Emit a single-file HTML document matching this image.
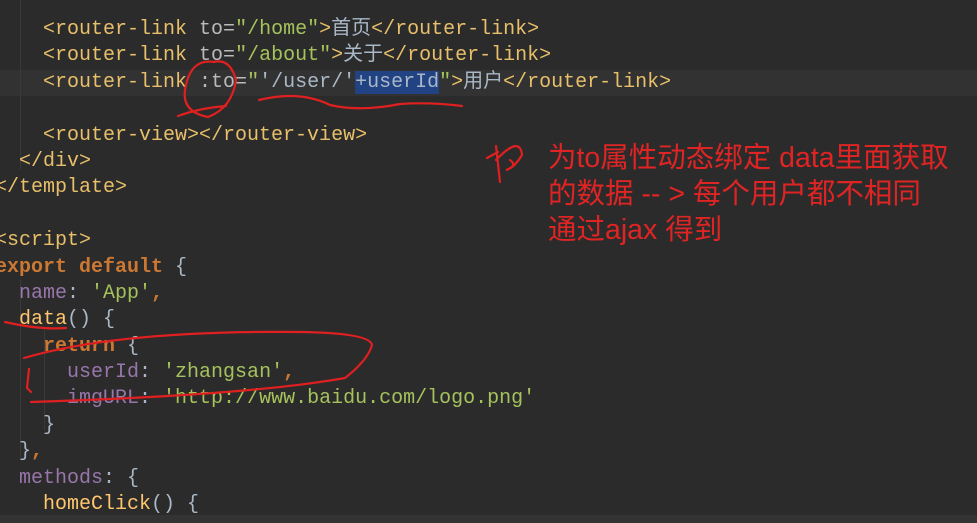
<!DOCTYPE html>
<html><head><meta charset="utf-8"><style>
body{margin:0;width:977px;height:523px;overflow:hidden;background:#2b2b2b;position:relative}
.code{position:absolute;left:-5px;top:17px;font-family:"Liberation Mono","Noto Sans CJK SC",monospace;font-size:20px;line-height:26.4px;color:#a9b7c6;white-space:pre}
.l{height:26.4px}
.t{color:#e8bf6a}.a{color:#bababa}.s{color:#a5c25c}.p{color:#9876aa}.k{color:#cc7832;font-weight:bold}.f{color:#ffc66d}
.cur{position:absolute;left:0;top:70px;width:977px;height:26px;background:#323232}
.sel{background:#214283}
.note{position:absolute;left:548px;top:140px;font-family:"Liberation Sans","Noto Sans CJK SC",sans-serif;font-size:28.5px;line-height:36px;color:#e02424;white-space:pre}
.bot{position:absolute;left:0;top:515px;width:977px;height:8px;background:#333}
.guide{position:absolute;width:1px;background:#3a3a3a}
</style></head><body>
<div class="cur"></div>
<div class="guide" style="left:20px;top:0;height:170px"></div>
<div class="guide" style="left:20px;top:280px;height:180px"></div>
<div class="guide" style="left:44px;top:330px;height:100px"></div>
<div class="code"><div class="l">    <span class="t">&lt;router-link </span><span class="a">to=</span><span class="s">"/home"</span><span class="t">&gt;</span>首页<span class="t">&lt;/router-link&gt;</span></div><div class="l">    <span class="t">&lt;router-link </span><span class="a">to=</span><span class="s">"/about"</span><span class="t">&gt;</span>关于<span class="t">&lt;/router-link&gt;</span></div><div class="l">    <span class="t">&lt;router-link </span><span class="a">:to=</span><span class="s">"</span>'/user/'<span class="sel">+userId</span><span class="s">"</span><span class="t">&gt;</span>用户<span class="t">&lt;/router-link&gt;</span></div><div class="l"> </div><div class="l">    <span class="t">&lt;router-view&gt;&lt;/router-view&gt;</span></div><div class="l">  <span class="t">&lt;/div&gt;</span></div><div class="l"><span class="t">&lt;/template&gt;</span></div><div class="l"> </div><div class="l"><span class="t">&lt;script&gt;</span></div><div class="l"><span class="k">export default</span> {</div><div class="l">  <span class="p">name</span>: <span class="s">'App'</span><span class="k">,</span></div><div class="l">  <span class="f">data</span>() {</div><div class="l">    <span class="k">return</span> {</div><div class="l">      <span class="p">userId</span>: <span class="s">'zhangsan'</span><span class="k">,</span></div><div class="l">      <span class="p">imgURL</span>: <span class="s">'http://www.baidu.com/logo.png'</span></div><div class="l">    }</div><div class="l">  }<span class="k">,</span></div><div class="l">  <span class="p">methods</span>: {</div><div class="l">    <span class="f">homeClick</span>() {</div></div>
<div class="note">为to属性动态绑定 data里面获取
的数据 -- &gt; 每个用户都不相同
通过ajax 得到</div>
<svg style="position:absolute;left:0;top:0" width="977" height="523" fill="none" stroke="#e02020" stroke-width="2.2" stroke-linecap="round">
<path d="M178 116 Q200 108 226 106 M214 62 Q190 58 185 90 Q182 112 208 117 Q232 108 236 80 Q230 58 214 62"/>
<path d="M259 100 Q300 90 330 105 Q360 112 400 104 Q430 102 462 106"/>
<path d="M5 322 Q40 330 66 328"/>
<path d="M24 358 Q120 330 300 332 Q370 333 372 345 Q368 360 345 378 Q250 395 31 402"/>
<path d="M29 369 L27 388 L31 392"/>
<path d="M496 146 L500 182 M487 158 L498 152 M496 160 Q520 135 522 155 Q514 168 506 170 Q518 166 510 160"/>
</svg>
<div class="bot"></div>
</body></html>
